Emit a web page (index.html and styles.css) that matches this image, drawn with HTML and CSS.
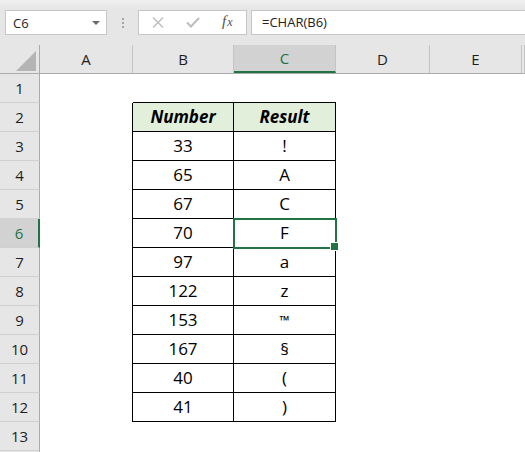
FILE: index.html
```html
<!DOCTYPE html>
<html>
<head>
<meta charset="utf-8">
<link rel="stylesheet" href="styles.css">
</head>
<body>
<div class="toolbar">
  <div class="namebox"><span class="nb-text">C6</span><span class="nb-arrow"></span></div>
  <div class="grip"><i></i><i></i><i></i></div>
  <div class="fxbox">
    <svg class="ic-x" width="12" height="11" viewBox="0 0 12 11"><path d="M1 0.5 L11 10.5 M11 0.5 L1 10.5" stroke="#bdbdbd" stroke-width="1.4" fill="none"/></svg>
    <svg class="ic-check" width="14" height="11" viewBox="0 0 14 11"><path d="M1 5.5 L5 9.5 L13 1" stroke="#bdbdbd" stroke-width="2" fill="none"/></svg>
    <span class="fx"><span class="fx-f">f</span><span class="fx-x">x</span></span>
  </div>
  <div class="formula">=CHAR(B6)</div>
</div>
<div class="sheet">
  <div class="hrow">
    <div class="corner"><span class="tri"></span></div>
    <div class="ch">A</div>
    <div class="ch">B</div>
    <div class="ch active">C</div>
    <div class="ch">D</div>
    <div class="ch">E</div>
    <div class="ch"></div>
  </div>
  <div class="row"><div class="rh">1</div><div class="c"></div><div class="c bb"></div><div class="c bb"></div><div class="c"></div><div class="c"></div><div class="c"></div></div>
  <div class="row"><div class="rh">2</div><div class="c tl"></div><div class="c t hd">Number</div><div class="c t hd">Result</div><div class="c"></div><div class="c"></div><div class="c"></div></div>
  <div class="row"><div class="rh">3</div><div class="c tl"></div><div class="c t">33</div><div class="c t">!</div><div class="c"></div><div class="c"></div><div class="c"></div></div>
  <div class="row"><div class="rh">4</div><div class="c tl"></div><div class="c t">65</div><div class="c t">A</div><div class="c"></div><div class="c"></div><div class="c"></div></div>
  <div class="row"><div class="rh">5</div><div class="c tl"></div><div class="c t">67</div><div class="c t">C</div><div class="c"></div><div class="c"></div><div class="c"></div></div>
  <div class="row"><div class="rh active">6</div><div class="c tl"></div><div class="c t">70</div><div class="c t sel">F</div><div class="c"></div><div class="c"></div><div class="c"></div></div>
  <div class="row"><div class="rh">7</div><div class="c tl"></div><div class="c t">97</div><div class="c t">a</div><div class="c"></div><div class="c"></div><div class="c"></div></div>
  <div class="row"><div class="rh">8</div><div class="c tl"></div><div class="c t">122</div><div class="c t">z</div><div class="c"></div><div class="c"></div><div class="c"></div></div>
  <div class="row"><div class="rh">9</div><div class="c tl"></div><div class="c t">153</div><div class="c t tm">™</div><div class="c"></div><div class="c"></div><div class="c"></div></div>
  <div class="row"><div class="rh">10</div><div class="c tl"></div><div class="c t">167</div><div class="c t">§</div><div class="c"></div><div class="c"></div><div class="c"></div></div>
  <div class="row"><div class="rh">11</div><div class="c tl"></div><div class="c t">40</div><div class="c t">(</div><div class="c"></div><div class="c"></div><div class="c"></div></div>
  <div class="row"><div class="rh">12</div><div class="c tl"></div><div class="c t">41</div><div class="c t">)</div><div class="c"></div><div class="c"></div><div class="c"></div></div>
  <div class="row"><div class="rh">13</div><div class="c"></div><div class="c"></div><div class="c"></div><div class="c"></div><div class="c"></div><div class="c"></div></div>
  <div class="row"><div class="rh"></div><div class="c"></div><div class="c"></div><div class="c"></div><div class="c"></div><div class="c"></div><div class="c"></div></div>
</div>
</body>
</html>
```

FILE: styles.css
```css
* { box-sizing: border-box; }
html, body {
  margin: 0;
  padding: 0;
  width: 525px;
  height: 452px;
  overflow: hidden;
  background: #ffffff;
  font-family: "Open Sans", "Liberation Sans", sans-serif;
}

.toolbar {
  height: 45px;
  display: flex;
  align-items: flex-start;
  padding: 10px 0 0 5px;
  background: linear-gradient(#efefef, #e6e6e6 9px);
}

.namebox {
  width: 102px;
  height: 25px;
  background: #fff;
  border: 1px solid #c6c6c6;
  display: flex;
  align-items: center;
  justify-content: space-between;
  padding: 0 6px 0 7px;
  font-size: 13px;
  color: #222;
}
.nb-arrow {
  width: 0;
  height: 0;
  border-left: 4px solid transparent;
  border-right: 4px solid transparent;
  border-top: 4px solid #6a6a6a;
  margin-top: 1px;
}

.grip {
  width: 31px;
  height: 25px;
  display: flex;
  flex-direction: column;
  align-items: center;
  justify-content: center;
  gap: 2px;
}
.grip i {
  display: block;
  width: 2px;
  height: 2px;
  background: #a6a6a6;
}

.fxbox {
  width: 109px;
  height: 25px;
  background: #fff;
  border: 1px solid #c6c6c6;
  display: flex;
  align-items: center;
  padding-left: 13px;
}
.ic-check { margin-left: 22px; }
.fx {
  margin-left: 22px;
  font-family: "Liberation Serif", serif;
  font-style: italic;
  color: #505050;
  font-size: 15px;
  line-height: 1;
  margin-top: -2px;
}
.fx-x { font-size: 12px; margin-left: 1px; }

.formula {
  flex: 1;
  height: 25px;
  margin-left: 4px;
  margin-right: -6px;
  background: #fff;
  border: 1px solid #c6c6c6;
  font-size: 13px;
  line-height: 22px;
  padding-left: 10px;
  color: #222;
}

.sheet {
  height: 407px;
  overflow: hidden;
}

.hrow, .row {
  display: grid;
  grid-template-columns: 40px 93px 101px 102px 94px 92px 1fr;
}
.hrow {
  height: 29px;
  background: #e6e6e6;
  border-bottom: 1px solid #ababab;
}
.corner {
  border-right: 1px solid #ababab;
  display: flex;
  justify-content: flex-end;
  align-items: flex-end;
  padding: 0 3px 2px 0;
}
.tri {
  width: 20px;
  height: 20px;
  background: #b4b4b4;
  clip-path: polygon(100% 0, 100% 100%, 0 100%);
}
.ch {
  border-right: 1px solid #c4c4c4;
  text-align: center;
  font-size: 15px;
  line-height: 28px;
  color: #1e1e1e;
}
.ch.active {
  background: #d2d2d2;
  color: #217346;
  border-bottom: 2px solid #217346;
  line-height: 27px;
  height: 28px;
  margin-bottom: -1px;
}

.row { height: 29px; }
.rh {
  background: #e6e6e6;
  border-right: 1px solid #ababab;
  border-bottom: 1px solid #d0d0d0;
  text-align: center;
  font-size: 15px;
  line-height: 28px;
  color: #1e1e1e;
}
.rh.active {
  background: #d2d2d2;
  color: #217346;
  border-right: 2px solid #217346;
}

.c {
  font-family: "Open Sans", "Liberation Sans", sans-serif;
  font-size: 17px;
  line-height: 28px;
  text-align: center;
  color: #000;
}
.bb { border-bottom: 1px solid #000; }
.tl { border-right: 1px solid #000; }
.t {
  border-right: 1px solid #000;
  border-bottom: 1px solid #000;
}
.hd {
  background: #e2efda;
  font-weight: 700;
  font-style: italic;
}
.tm { font-size: 13px; font-weight: 700; }

.sel {
  position: relative;
  outline: 2px solid #217346;
  outline-offset: -1px;
}
.sel::after {
  content: "";
  position: absolute;
  right: -4px;
  bottom: -4px;
  width: 7px;
  height: 7px;
  background: #217346;
  border: 1px solid #fff;
}
```
